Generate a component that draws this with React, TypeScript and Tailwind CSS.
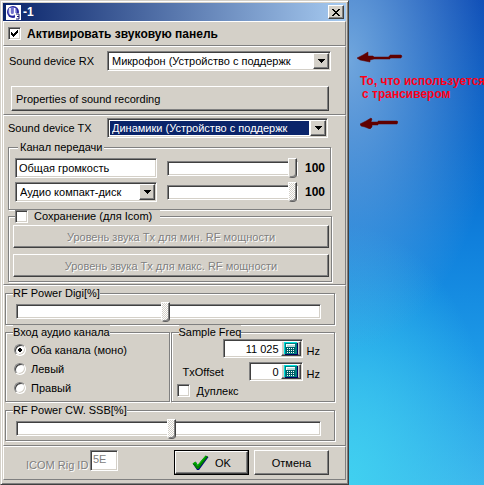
import { useState } from 'react';
import type { ButtonHTMLAttributes, ReactNode } from 'react';
import { clsx } from 'clsx';

const raised =
  'border border-t-white border-l-white border-r-[#404040] border-b-[#404040] shadow-[inset_-1px_-1px_0_#808080]';
const sunken =
  'border border-t-[#808080] border-l-[#808080] border-r-white border-b-white shadow-[inset_1px_1px_0_#404040,inset_-1px_-1px_0_#d4d0c8]';
const embossed = 'text-[#808080] [text-shadow:1px_1px_0_#fff]';

function Panel({ className, children }: { className?: string; children: ReactNode }) {
  return (
    <div
      className={clsx(
        'border border-t-white border-l-white border-r-[#808080] border-b-[#808080]',
        className
      )}
    >
      {children}
    </div>
  );
}

interface GroupProps {
  legend: ReactNode;
  legendClass?: string;
  className?: string;
  children: ReactNode;
}

function Group({ legend, legendClass = 'ml-[7px] h-3.5', className, children }: GroupProps) {
  return (
    <fieldset className="min-w-0 border border-[#808080] shadow-[1px_1px_0_#fff,inset_1px_1px_0_#fff]">
      <legend className={clsx('bg-[#d4d0c8] leading-[14px]', legendClass)}>{legend}</legend>
      <div className={className}>{children}</div>
    </fieldset>
  );
}

function Button({ className, children, ...props }: ButtonHTMLAttributes<HTMLButtonElement>) {
  return (
    <button type="button" className={clsx('bg-[#d4d0c8]', raised, className)} {...props}>
      {children}
    </button>
  );
}

interface ComboProps {
  id?: string;
  label?: string;
  options: string[];
  selected?: boolean;
  className?: string;
}

function Combo({ id, label, options, selected, className }: ComboProps) {
  return (
    <div className={clsx('relative flex h-5 bg-white p-0.5', sunken, className)}>
      <select
        id={id}
        aria-label={label}
        className={clsx(
          'mr-4 min-w-0 flex-1 appearance-none pl-0.5 leading-[14px] outline-none',
          selected ? 'bg-[#0a246a] text-white' : 'bg-white'
        )}
      >
        {options.map((o) => (
          <option key={o}>{o}</option>
        ))}
      </select>
      <span
        className={clsx(
          'pointer-events-none absolute inset-y-px right-px flex w-4 items-center justify-center bg-[#d4d0c8]',
          raised
        )}
      >
        <svg width="7" height="4" viewBox="0 0 7 4" shapeRendering="crispEdges">
          <path d="M0 0h7v1h-1v1h-1v1h-1v1h-1v-1h-1v-1h-1v-1h-1z" fill="#000" />
        </svg>
      </span>
    </div>
  );
}

interface SliderProps {
  label: string;
  value: number;
  onChange: (value: number) => void;
  dithered?: boolean;
  className?: string;
}

function Slider({ label, value, onChange, dithered, className }: SliderProps) {
  return (
    <input
      type="range"
      aria-label={label}
      min={0}
      max={100}
      value={value}
      onChange={(e) => onChange(Number(e.target.value))}
      className={clsx(
        'block h-[15px] min-w-0 appearance-none bg-white outline-none',
        '[&::-webkit-slider-thumb]:h-5 [&::-webkit-slider-thumb]:w-[9px] [&::-webkit-slider-thumb]:appearance-none',
        '[&::-webkit-slider-thumb]:rounded-b-[4px] [&::-webkit-slider-thumb]:border [&::-webkit-slider-thumb]:border-t-white [&::-webkit-slider-thumb]:border-l-white [&::-webkit-slider-thumb]:border-r-[#404040] [&::-webkit-slider-thumb]:border-b-[#606060]',
        '[&::-webkit-slider-thumb]:shadow-[inset_-1px_-1px_0_#808080]',
        dithered
          ? '[&::-webkit-slider-thumb]:bg-[repeating-conic-gradient(#fff_0_25%,#d4d0c8_0_50%)] [&::-webkit-slider-thumb]:bg-[length:2px_2px]'
          : '[&::-webkit-slider-thumb]:bg-[#d4d0c8]',
        sunken,
        className
      )}
    />
  );
}

interface CheckProps {
  checked: boolean;
  onChange: (checked: boolean) => void;
  className?: string;
  children: ReactNode;
}

function Check({ checked, onChange, className, children }: CheckProps) {
  return (
    <label className={clsx('flex items-center whitespace-nowrap', className)}>
      <span className="relative flex">
        <input
          type="checkbox"
          checked={checked}
          onChange={(e) => onChange(e.target.checked)}
          className={clsx('size-[13px] appearance-none bg-white', sunken)}
        />
        {checked && (
          <svg
            className="pointer-events-none absolute inset-[3px]"
            width="7"
            height="7"
            viewBox="0 0 7 7"
            shapeRendering="crispEdges"
          >
            <path d="M0 2h1v1h1v1h1v-1h1v-1h1v-1h1v-1h1v3h-1v1h-1v1h-1v1h-1v1h-1v-1h-1v-1h-1z" />
          </svg>
        )}
      </span>
      {children}
    </label>
  );
}

function NumberField({ id, value, className }: { id: string; value: string; className: string }) {
  return (
    <div className={clsx('flex h-[19px] bg-white p-px', sunken, className)}>
      <input
        id={id}
        defaultValue={value}
        className="min-w-0 flex-1 bg-transparent pr-0.5 text-right leading-[14px] outline-none"
      />
      <Button aria-label="Калькулятор" className="flex w-5 items-center justify-center">
        <svg width="14" height="13" viewBox="0 0 14 13" shapeRendering="crispEdges">
          <path d="M0 0h13v12h-13z" fill="#008080" />
          <path d="M0 0h13v1h-12v11h-1z" fill="#00e0e0" />
          <path d="M13 1h1v12h-13v-1h12z" fill="#000060" />
          <path d="M2 2h9v9h-9z" fill="#006068" />
          <path d="M2 2h9v3h-9z" fill="#fff" />
          <path d="M3 3h8v2h-8z" fill="#b8d8d8" />
          <path
            d="M3 6h1v1h-1zM5 6h1v1h-1zM7 6h1v1h-1zM9 6h1v1h-1zM3 8h1v1h-1zM5 8h1v1h-1zM7 8h1v1h-1zM9 8h1v1h-1zM3 10h1v1h-1zM5 10h1v1h-1zM7 10h1v1h-1zM9 10h1v1h-1z"
            fill="#fff"
          />
        </svg>
      </Button>
    </div>
  );
}

function TitleBar() {
  return (
    <div className="flex h-[18px] items-center bg-linear-to-r/srgb from-[#0a246a] to-[#a6caf0] pr-0.5 pl-[3px]">
      <svg width="15" height="15" viewBox="0 0 15 15">
        <rect width="15" height="15" fill="#fff" />
        <circle cx="7" cy="7" r="6" fill="#24249c" />
        <circle cx="6.5" cy="6.5" r="4.6" fill="#7070cc" />
        <path d="M4 3v4.500a2.300 2.300 0 0 0 4.600 0v-4.500" fill="none" stroke="#fff" strokeWidth="1.500" />
        <path d="M9 8h6v7h-6z" fill="#fff" />
        <path d="M10 9h3v5h-3M11 11.500h2" fill="none" stroke="#181870" strokeWidth="1" />
      </svg>
      <h1 className="ml-0.5 flex-1 text-xs font-bold text-white">-1</h1>
      <Button aria-label="Закрыть" className="flex h-3.5 w-4 items-center justify-center">
        <svg width="8" height="7" viewBox="0 0 8 7" shapeRendering="crispEdges">
          <path d="M0 0h2v1h1v1h2v-1h1v-1h2v1h-1v1h-1v1h-1v1h1v1h1v1h1v1h-2v-1h-1v-1h-2v1h-1v1h-2v-1h1v-1h1v-1h1v-1h-1v-1h-1v-1h-1z" />
        </svg>
      </Button>
    </div>
  );
}

const channels = ['Оба канала (моно)', 'Левый', 'Правый'];

function SoundDialog() {
  const [active, setActive] = useState(true);
  const [save, setSave] = useState(false);
  const [duplex, setDuplex] = useState(false);
  const [channel, setChannel] = useState(0);
  const [master, setMaster] = useState(100);
  const [disc, setDisc] = useState(100);
  const [digi, setDigi] = useState(49);
  const [cw, setCw] = useState(51);

  return (
    <form className="min-w-0 shrink basis-[349px] border border-t-[#d4d0c8] border-l-[#d4d0c8] border-r-[#404040] border-b-[#404040] bg-[#d4d0c8] p-0.5 shadow-[inset_1px_1px_0_#fff,inset_-1px_-1px_0_#808080]">
      <TitleBar />

      <Panel className="flex h-[25px] items-center pl-1">
        <Check checked={active} onChange={setActive} className="gap-1.5 text-xs font-bold">
          Активировать звуковую панель
        </Check>
      </Panel>

      <Panel className="pt-1 pr-3.5 pb-[3px] pl-[5px]">
        <div className="flex items-center">
          <label htmlFor="rx" className="w-[98px] shrink-0 whitespace-nowrap">
            Sound device RX
          </label>
          <Combo id="rx" className="min-w-0 flex-1" options={['Микрофон (Устройство с поддержк']} />
        </div>
        <div className="mt-[15px] flex px-0.5">
          <Button className="h-[25px] flex-1 pl-1 text-left">Properties of sound recording</Button>
        </div>
      </Panel>

      <Panel className="px-1 pt-0.5 pb-0.5">
        <div className="flex items-center pr-[13px]">
          <label htmlFor="tx" className="w-[99px] shrink-0 whitespace-nowrap">
            Sound device TX
          </label>
          <Combo id="tx" selected className="min-w-0 flex-1" options={['Динамики (Устройство с поддержк']} />
        </div>

        <div className="mt-0.5 pr-2.5">
          <Group
            legend="Канал передачи"
            legendClass="ml-[9px] h-3.5 px-0.5"
            className="flex flex-col gap-1 pt-1 pr-1 pb-[7px] pl-1.5"
          >
            <div className="flex items-center">
              <input
                aria-label="Канал"
                defaultValue="Общая громкость"
                className={clsx('h-5 w-[142px] min-w-0 bg-white pl-[3px] leading-[14px] outline-none', sunken)}
              />
              <Slider label="Общая громкость" value={master} onChange={setMaster} className="ml-2.5 flex-1" />
              <output className="ml-[7px] w-[21px] text-xs font-bold">{master}</output>
            </div>
            <div className="flex items-center">
              <Combo label="Источник" className="w-[142px]" options={['Аудио компакт-диск']} />
              <Slider label="Аудио компакт-диск" value={disc} onChange={setDisc} dithered className="ml-2.5 flex-1" />
              <output className="ml-[7px] w-[21px] text-xs font-bold">{disc}</output>
            </div>
          </Group>
        </div>

        <div className="pr-[9px]">
          <Group
            legend={
              <Check checked={save} onChange={setSave} className="h-3 gap-1.5 pr-2">
                Сохранение (для Icom)
              </Check>
            }
            legendClass="ml-1.5 h-3"
            className="flex flex-col gap-1.5 pt-[3px] pr-0.5 pb-1 pl-1"
          >
            <Button disabled className={clsx('h-[23px]', embossed)}>
              Уровень звука Tx для мин. RF мощности
            </Button>
            <Button disabled className={clsx('h-[23px]', embossed)}>
              Уровень звука Tx для макс. RF мощности
            </Button>
          </Group>
        </div>
      </Panel>

      <Panel className="pr-2.5 pb-1 pl-px">
        <Group legend="RF Power Digi[%]" className="pt-1 pr-[13px] pb-[5px] pl-2.5">
          <Slider label="RF Power Digi" value={digi} onChange={setDigi} dithered className="w-full" />
        </Group>

        <div className="grid grid-cols-2 gap-px">
          <Group legend="Вход аудио канала" className="pt-px pb-1 pl-2">
            {channels.map((name, i) => (
              <label key={name} className="flex h-[19px] items-center gap-1 whitespace-nowrap">
                <input
                  type="radio"
                  name="channel"
                  checked={channel === i}
                  onChange={() => setChannel(i)}
                  className={clsx(
                    'mr-px size-3 appearance-none rounded-full bg-white checked:bg-[radial-gradient(circle,#000_2px,#fff_2px)]',
                    sunken
                  )}
                />
                {name}
              </label>
            ))}
          </Group>

          <Group legend="Sample Freq" className="pr-3.5 pb-1 pl-[5px]">
            <div className="flex items-center justify-end gap-1">
              <NumberField id="freq" value="11 025" className="w-20" />
              <label htmlFor="freq" className="pt-1">
                Hz
              </label>
            </div>
            <div className="mt-1 flex items-center justify-end gap-1">
              <label htmlFor="offset" className="mr-auto pl-1.5">
                TxOffset
              </label>
              <NumberField id="offset" value="0" className="w-[54px]" />
              <span className="pt-1">Hz</span>
            </div>
            <Check checked={duplex} onChange={setDuplex} className="mt-[3px] h-[13px] gap-[7px]">
              Дуплекс
            </Check>
          </Group>
        </div>

        <div className="mt-px">
          <Group legend="RF Power CW. SSB[%]" className="pt-1 pr-[13px] pb-1 pl-2.5">
            <Slider label="RF Power CW, SSB" value={cw} onChange={setCw} dithered className="w-full" />
          </Group>
        </div>
      </Panel>

      <Panel className="flex items-start pt-[3px] pr-4 pb-1 pl-[22px]">
        <label htmlFor="rig" className={clsx('w-16 pt-2 whitespace-nowrap', embossed)}>
          ICOM Rig ID
        </label>
        <input
          id="rig"
          disabled
          defaultValue="5E"
          className={clsx('h-[21px] w-7 bg-white pb-1 pl-0.5 text-[#808080]', sunken)}
        />
        <div className="ml-auto flex gap-[5px]">
          <div className="border border-black">
            <Button className="flex h-[23px] w-[73px] items-center justify-center gap-1.5">
              <svg width="17" height="16" viewBox="0 0 17 16">
                <path d="M1 9l3-2 2 3.500 8-9.500 2.500 1-9.500 13h-2z" fill="#000080" />
                <path d="M0.500 8.500l3-2 2 3.500 8-9.500 2.500 1-9.500 12.500h-1.500z" fill="#008000" />
                <path d="M1.500 8.500l2-1 2 3.500 8-9.500" fill="none" stroke="#00c800" strokeWidth="1" />
              </svg>
              OK
            </Button>
          </div>
          <Button className="h-[25px] w-[75px]">Отмена</Button>
        </div>
      </Panel>
    </form>
  );
}

function Desktop() {
  return (
    <div className="min-w-[135px] flex-1 overflow-hidden bg-[radial-gradient(ellipse_150px_290px_at_0_60px,#70a6dd,#70a6dd00),radial-gradient(ellipse_150px_260px_at_0_100%,#40d0f0,#40d0f000),linear-gradient(#0848b4,#0868cc_30%,#1080dc_50%,#1c98e6_72%,#3cb4ec)] pt-[51px] pl-2">
      <svg width="46" height="12" viewBox="0 0 46 12">
        <path d="M0 7l6-3 5-3v4h5l1 1h15v-1h1v-1h11l1 1-1 2h-11v1h-16l-4 1v2l-5-1-5-1z" fill="#600000" stroke="#600000" strokeWidth="0.500" />
      </svg>
      <p className="mt-3 ml-[3px] text-xs leading-[13px] font-bold whitespace-nowrap text-[#ff0018]">
        То, что используется
        <br />
        <span className="pl-0.5">с трансивером</span>
      </p>
      <svg className="mt-4 ml-[3px]" width="38" height="12" viewBox="0 0 38 12">
        <path d="M0 7l6-3 5-3 1 1-1 3h7v-1h19l1 1-1 2h-19v1h-6v2l-2 2-5-2-4-1z" fill="#600000" stroke="#600000" strokeWidth="0.500" />
      </svg>
    </div>
  );
}

export default function App() {
  return (
    <main className="flex min-h-screen font-['Liberation_Sans','Roboto',sans-serif] text-[11px] leading-[14px] text-black">
      <SoundDialog />
      <Desktop />
    </main>
  );
}
